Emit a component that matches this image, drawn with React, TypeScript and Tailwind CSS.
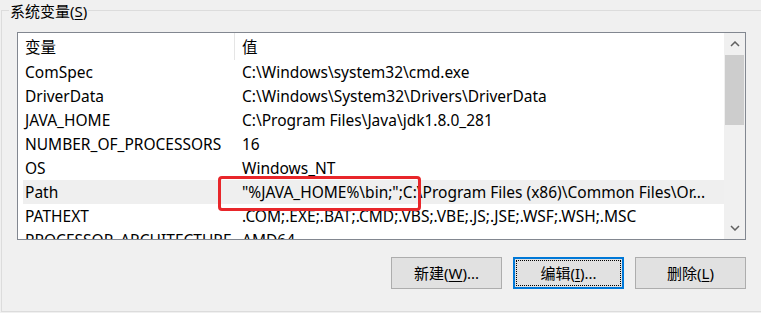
import React from 'react';

const rows: { name: string; value: string; selected?: boolean }[] = [
  { name: 'ComSpec', value: 'C:\\Windows\\system32\\cmd.exe' },
  { name: 'DriverData', value: 'C:\\Windows\\System32\\Drivers\\DriverData' },
  { name: 'JAVA_HOME', value: 'C:\\Program Files\\Java\\jdk1.8.0_281' },
  { name: 'NUMBER_OF_PROCESSORS', value: '16' },
  { name: 'OS', value: 'Windows_NT' },
  { name: 'Path', value: '"%JAVA_HOME%\\bin;";C:\\Program Files (x86)\\Common Files\\Or...', selected: true },
  { name: 'PATHEXT', value: '.COM;.EXE;.BAT;.CMD;.VBS;.VBE;.JS;.JSE;.WSF;.WSH;.MSC' },
  { name: 'PROCESSOR_ARCHITECTURE', value: 'AMD64' },
];

const font = "font-['Noto_Sans','Noto_Sans_CJK_SC',sans-serif]";

const Btn = ({ label, hotkey, tail, focused }: { label: string; hotkey: string; tail: string; focused?: boolean }) => (
  <button
    type="button"
    className={`w-[111px] h-[32px] bg-[#e1e1e1] text-[15px] text-black flex items-center justify-center ${
      focused ? 'border-2 border-[#0078d7] p-[1px]' : 'border border-[#adadad]'
    }`}
  >
    <span className={`w-full h-full flex items-center justify-center ${focused ? 'border border-dotted border-black' : ''}`}>
      {label}(<span className="underline underline-offset-2">{hotkey}</span>){tail}
    </span>
  </button>
);

export default function App() {
  return (
    <div className={`w-[761px] h-[313px] bg-[#f0f0f0] relative overflow-hidden ${font} text-black`}>
      {/* group box */}
      <div className="ml-[1px] mt-[10px] w-[780px] h-[302px] border border-[#dcdcdc] relative">
        <div className="absolute left-[7px] top-[-10px] bg-[#f0f0f0] px-[1px] text-[15px] leading-[20px]">
          系统变量(<span className="underline underline-offset-2">S</span>)
        </div>

        {/* list view */}
        <div className="ml-[15px] mt-[21px] w-[729px] h-[208px] border border-[#828790] bg-white flex overflow-hidden">
          <div className="flex-1 pl-[5px] overflow-hidden text-[15.5px]">
            <div className="h-[27px] flex items-center">
              <div className="w-[212px] h-full flex items-center pl-[2px] pt-[2px] border-r border-[#e5e5e5]">变量</div>
              <div className="pl-[7px] pt-[2px]">值</div>
            </div>
            {rows.map((r) => (
              <div key={r.name} className={`h-[24px] pt-[2px] flex items-center whitespace-nowrap ${r.selected ? 'bg-[#efefef]' : ''}`}>
                <div className="w-[212px] pl-[2px] shrink-0">{r.name}</div>
                <div className="pl-[7px]">{r.value}</div>
              </div>
            ))}
          </div>

          {/* scrollbar */}
          <div className="w-[21px] bg-[#f0f0f0] flex flex-col">
            <div className="h-[22px] flex items-center justify-center">
              <svg width="10" height="6" viewBox="0 0 10 6">
                <path d="M1 5 L5 1 L9 5" fill="none" stroke="#606060" strokeWidth="1.5" />
              </svg>
            </div>
            <div className="mx-[1px] h-[70px] bg-[#cdcdcd]" />
            <div className="flex-1" />
            <div className="h-[22px] flex items-center justify-center">
              <svg width="10" height="6" viewBox="0 0 10 6">
                <path d="M1 1 L5 5 L9 1" fill="none" stroke="#606060" strokeWidth="1.5" />
              </svg>
            </div>
          </div>
        </div>

        {/* buttons */}
        <div className="ml-[15px] w-[729px] mt-[17px] flex justify-end gap-[11px]">
          <Btn label="新建" hotkey="W" tail="..." />
          <Btn label="编辑" hotkey="I" tail="..." focused />
          <Btn label="删除" hotkey="L" tail="" />
        </div>
      </div>

      {/* red annotation */}
      <div className="absolute left-[218px] top-[176px] w-[203px] h-[35px] border-[3px] border-[#e8262a] rounded-[4px]" />
    </div>
  );
}
